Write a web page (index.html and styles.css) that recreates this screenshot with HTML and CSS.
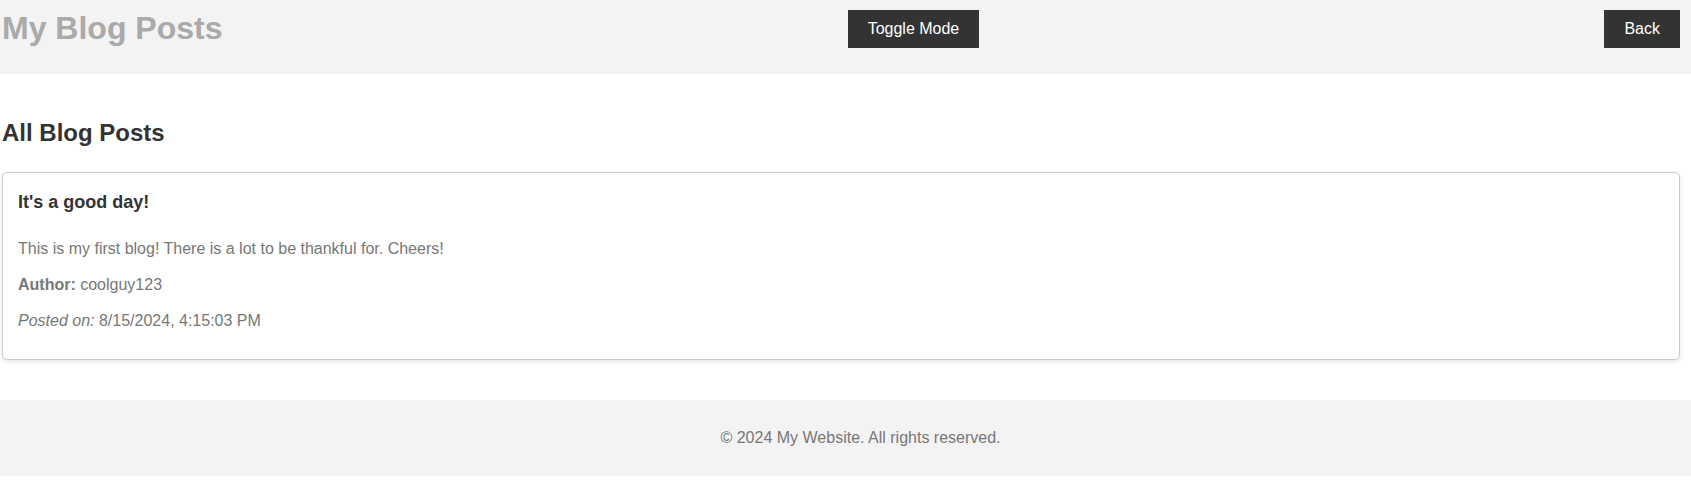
FILE: index.html
```html
<!DOCTYPE html>
<html lang="en">
<head>
<meta charset="utf-8">
<title>My Blog Posts</title>
<link rel="stylesheet" href="styles.css">
</head>
<body>
<header class="site-header">
  <h1 class="site-title">My Blog Posts</h1>
  <button class="btn" type="button">Toggle Mode</button>
  <button class="btn" type="button">Back</button>
</header>
<main class="content">
  <h2 class="section-title">All Blog Posts</h2>
  <article class="post-card">
    <h3 class="post-title">It's a good day!</h3>
    <p class="post-text">This is my first blog! There is a lot to be thankful for. Cheers!</p>
    <p class="post-text"><strong>Author:</strong> coolguy123</p>
    <p class="post-text"><em>Posted on:</em> 8/15/2024, 4:15:03 PM</p>
  </article>
</main>
<footer class="site-footer">
  <p class="footer-text">© 2024 My Website. All rights reserved.</p>
</footer>
</body>
</html>
```

FILE: styles.css
```css
* { box-sizing: border-box; }

body {
  margin: 0;
  font-family: "Liberation Sans", Arial, sans-serif;
  background: #ffffff;
  color: #777777;
}

.site-header {
  display: flex;
  justify-content: space-between;
  align-items: flex-start;
  background: #f3f3f3;
  padding: 10px 11px 26px 2px;
}

.site-title {
  margin: 0;
  font-size: 32px;
  line-height: 36px;
  font-weight: bold;
  color: #aaaaaa;
}

.btn {
  font-family: "Liberation Sans", Arial, sans-serif;
  font-size: 16px;
  line-height: 18px;
  padding: 10px 20px;
  background: #333333;
  color: #ffffff;
  border: none;
  border-radius: 0;
  cursor: pointer;
}

.content {
  padding: 0 11px 0 2px;
}

.section-title {
  margin: 45px 0 25px;
  font-size: 24px;
  line-height: 28px;
  font-weight: bold;
  color: #333333;
}

.post-card {
  border: 1px solid #cccccc;
  border-radius: 5px;
  box-shadow: 0 2px 4px rgba(0, 0, 0, 0.1);
  padding: 19px 15px 12px 15px;
  background: #ffffff;
}

.post-title {
  margin: 0 0 26px;
  font-size: 18px;
  line-height: 21px;
  font-weight: bold;
  color: #333333;
}

.post-text {
  margin: 0 0 16px;
  font-size: 16px;
  line-height: 20px;
  color: #777777;
}

.site-footer {
  margin-top: 40px;
  background: #f3f3f3;
  padding: 28px 0 28px 30px;
  text-align: center;
}

.footer-text {
  margin: 0;
  font-size: 16px;
  line-height: 20px;
  color: #777777;
}
```
